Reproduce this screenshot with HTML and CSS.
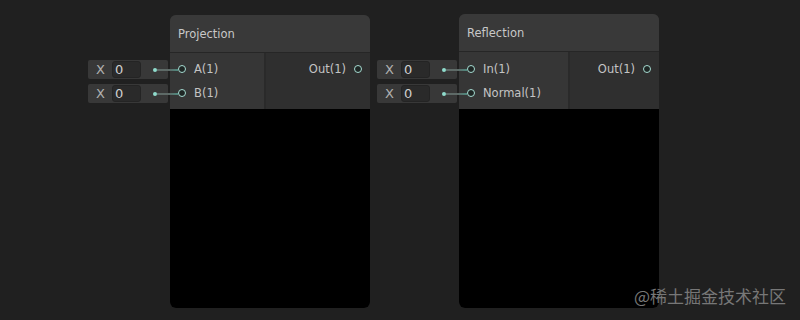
FILE: index.html
```html
<!DOCTYPE html>
<html lang="en">
<head>
  <meta charset="UTF-8">
  <title>Shader Graph Nodes</title>
  <link rel="stylesheet" href="styles.css">
</head>
<body>
  <div class="graph">
    <!-- Projection node -->
    <div class="node-group group-projection">
      <div class="fields">
        <div class="field"><span class="field-label">X</span><span class="field-input">0</span><span class="field-dot"></span></div>
        <div class="field"><span class="field-label">X</span><span class="field-input">0</span><span class="field-dot"></span></div>
      </div>
      <div class="node">
        <div class="node-title">Projection</div>
        <div class="node-ports">
          <div class="ports-in">
            <div class="port"><span class="port-pin"></span>A(1)</div>
            <div class="port"><span class="port-pin"></span>B(1)</div>
          </div>
          <div class="ports-out">
            <div class="port port-out">Out(1)<span class="port-pin"></span></div>
          </div>
        </div>
        <div class="node-preview"></div>
      </div>
    </div>

    <!-- Reflection node -->
    <div class="node-group group-reflection">
      <div class="fields">
        <div class="field"><span class="field-label">X</span><span class="field-input">0</span><span class="field-dot"></span></div>
        <div class="field"><span class="field-label">X</span><span class="field-input">0</span><span class="field-dot"></span></div>
      </div>
      <div class="node">
        <div class="node-title">Reflection</div>
        <div class="node-ports">
          <div class="ports-in wide">
            <div class="port"><span class="port-pin"></span>In(1)</div>
            <div class="port"><span class="port-pin"></span>Normal(1)</div>
          </div>
          <div class="ports-out">
            <div class="port port-out">Out(1)<span class="port-pin"></span></div>
          </div>
        </div>
        <div class="node-preview"></div>
      </div>
    </div>

    <div class="watermark">@稀土掘金技术社区</div>
  </div>
</body>
</html>
```

FILE: styles.css
```css
body {
  margin: 0;
  background-color: #202020;
  font-family: "DejaVu Sans", sans-serif;
  font-size: 11.5px;
  color: #c4c4c4;
}
.graph {
  position: relative;
  width: 800px;
  height: 320px;
  overflow: hidden;
}

/* Node groups sit on a free canvas */
.node-group {
  position: absolute;
  top: 15px;
  display: flex;
  gap: 2px;
}
.group-projection {
  left: 88px;
}
.group-reflection {
  left: 377px;
  top: 14px;
}
.group-reflection .fields {
  margin-top: 46px;
}
.group-reflection .ports-in,
.group-reflection .ports-out {
  padding-top: 5px;
}
.group-reflection .node-ports {
  height: 57px;
}

/* Default value fields */
.fields {
  display: flex;
  flex-direction: column;
  gap: 5px;
  margin-top: 45px;
}
.field {
  position: relative;
  display: flex;
  align-items: center;
  width: 80px;
  height: 19px;
  background-color: #383838;
  border-radius: 2px;
  font-size: 13px;
}
.field-label {
  width: 24px;
  padding-left: 8px;
  box-sizing: border-box;
  color: #b0b0b0;
}
.field-input {
  width: 29px;
  height: 17px;
  line-height: 16px;
  padding-left: 2px;
  box-sizing: border-box;
  background-color: #2a2a2a;
  border: 1px solid #242424;
  border-radius: 3px;
  color: #d0d0d0;
}
.field-dot {
  position: absolute;
  left: 65px;
  top: 8px;
  width: 4px;
  height: 4px;
  border-radius: 50%;
  background-color: #8fdccd;
}
.field-dot::after {
  content: "";
  position: absolute;
  left: 4px;
  top: 1px;
  width: 21px;
  height: 2px;
  background: linear-gradient(to right, #5e6a67 0, #5e6a67 55%, #4f8a7f 100%);
}

/* Node body */
.node {
  width: 200px;
  border-radius: 6px;
  overflow: hidden;
  background-color: #303030;
}
.node-title {
  height: 37px;
  line-height: 39px;
  padding-left: 8px;
  background-color: #393939;
  border-bottom: 1px solid #262626;
  color: #c8c8c8;
}
.node-ports {
  display: flex;
  height: 56px;
}
.ports-in {
  width: 94px;
  padding-top: 4px;
  background-color: #363636;
  border-right: 2px solid #2a2a2a;
}
.ports-in.wide {
  width: 109px;
}
.ports-out {
  flex: 1;
  padding-top: 4px;
  background-color: #2f2f2f;
}
.port {
  display: flex;
  align-items: center;
  height: 24px;
  padding-left: 8px;
  line-height: 27px;
}
.port .port-pin {
  margin-right: 8px;
}
.port-out {
  justify-content: flex-end;
  padding-left: 0;
  padding-right: 8px;
}
.port-out .port-pin {
  margin-right: 0;
  margin-left: 8px;
}
.port-pin {
  width: 8px;
  height: 8px;
  box-sizing: border-box;
  border: 1.5px solid #a6dcd2;
  border-radius: 50%;
  background-color: #1e2624;
}
.node-preview {
  height: 199px;
  background-color: #000;
}

.watermark {
  position: absolute;
  right: 14px;
  bottom: 12px;
  font-family: "Noto Sans CJK SC", sans-serif;
  font-size: 17px;
  color: #777;
}
```
